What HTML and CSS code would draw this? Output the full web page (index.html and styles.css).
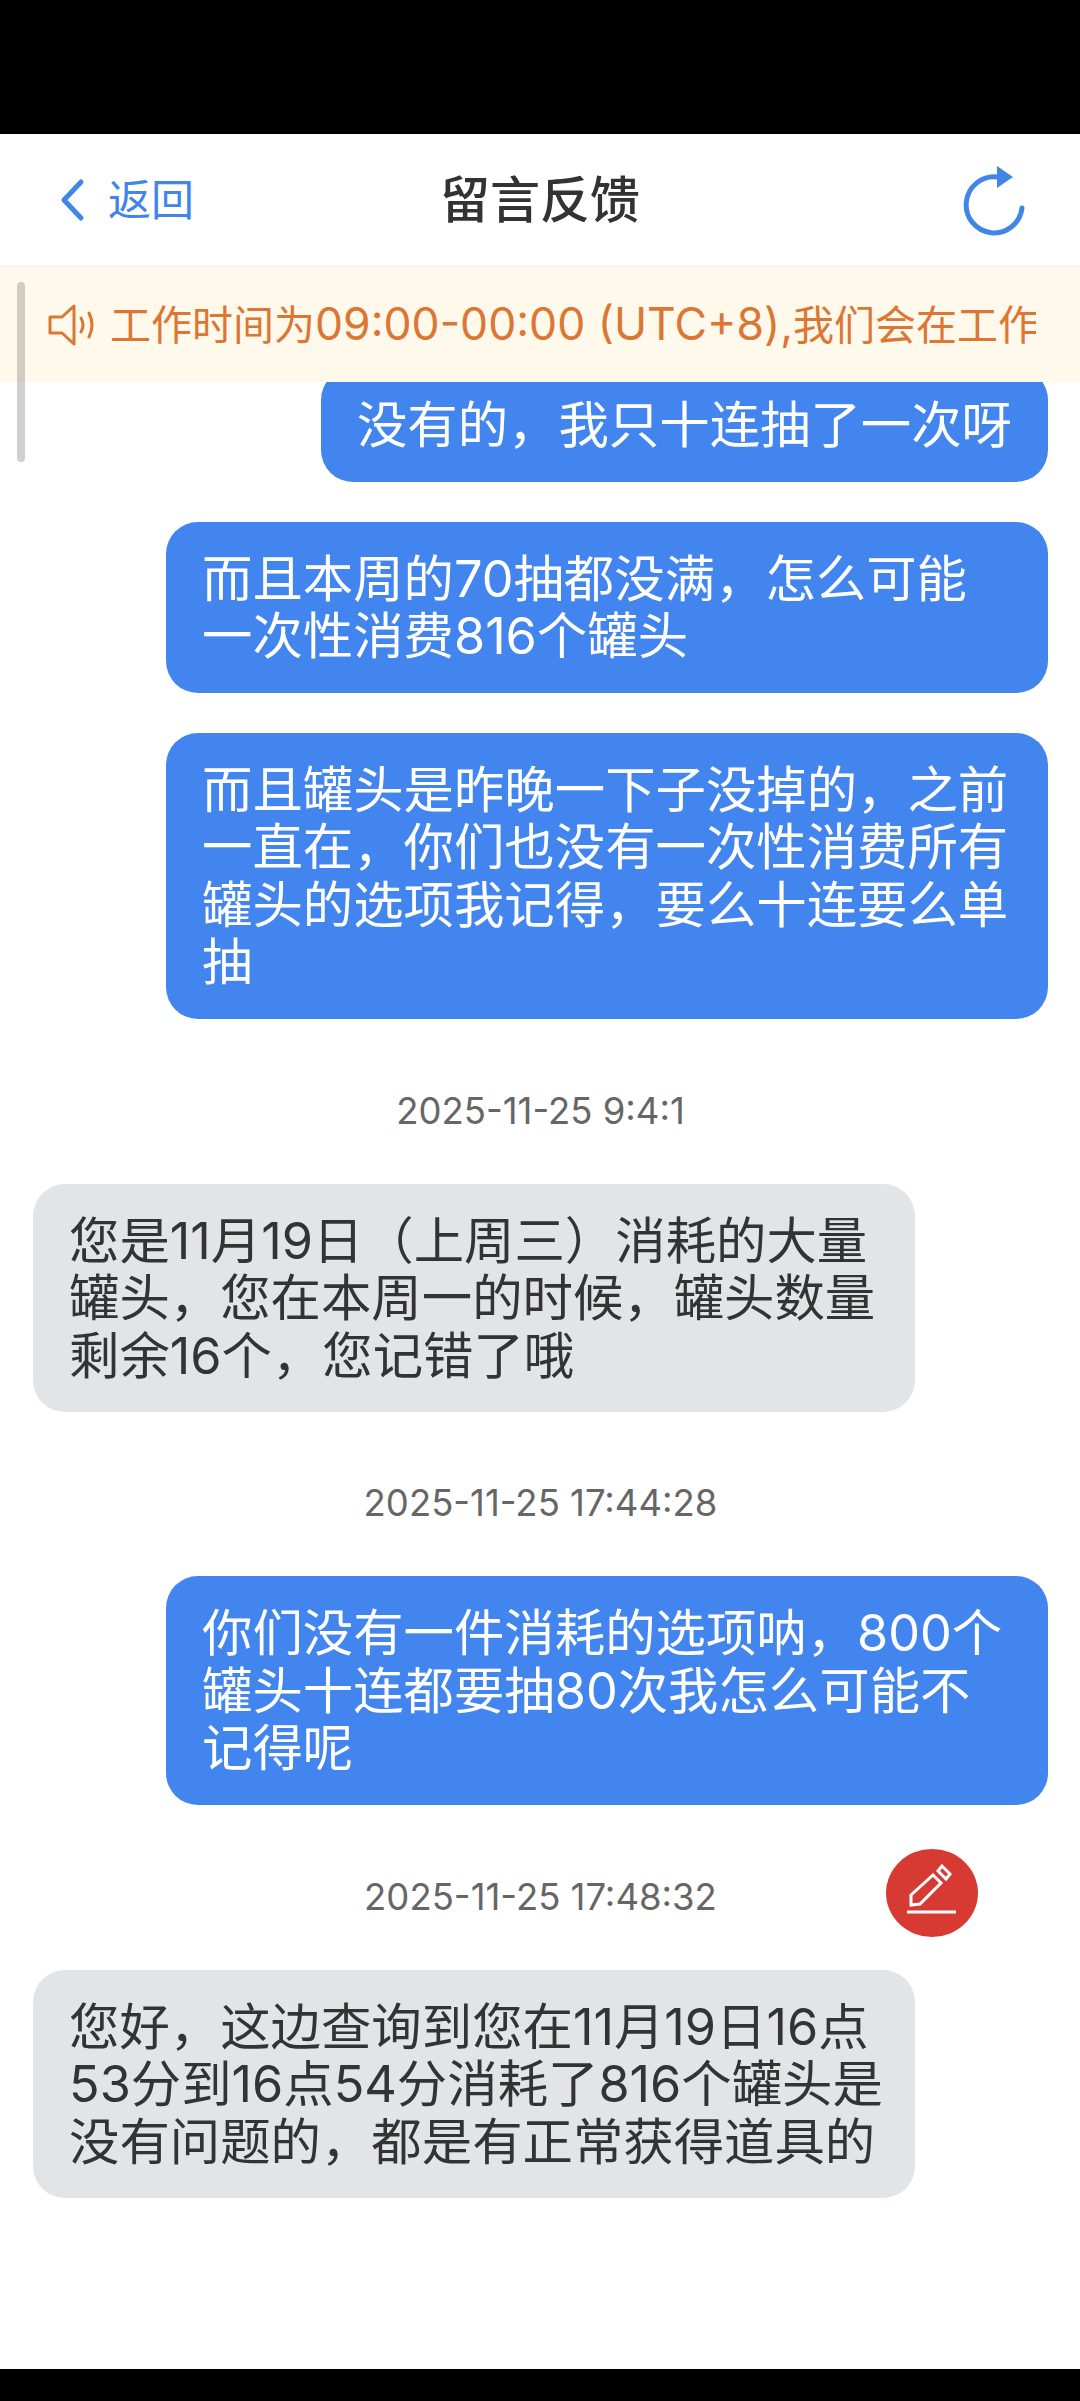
FILE: index.html
```html
<!DOCTYPE html>
<html lang="zh-CN">
<head>
  <meta charset="UTF-8">
  <meta name="viewport" content="width=device-width, initial-scale=1.0">
  <title>留言反馈</title>
  <link rel="stylesheet" href="styles.css">
</head>
<body>
  <div class="black-bar top"></div>
  <div class="page">
    <div class="header">
      <div class="back">
        <svg class="back-icon" viewBox="0 0 28 44"><path d="M23 4 L6 22 L23 40"/></svg>
        <span>返回</span>
      </div>
      <div class="title">留言反馈</div>
      <svg class="refresh" viewBox="0 0 64 72"><path class="ring" d="M36 13 A28 28 0 1 0 61 44"/><path class="arrow" d="M36 2 L52 13 L36 24 Z"/></svg>
    </div>
    <div class="notice">
      <svg class="speaker" viewBox="0 0 48 44"><path d="M2 14 H14 L26 3 V41 L14 30 H2 Z"/><path d="M33 15 Q37 22 33 29"/><path d="M41 10 Q47 22 41 34"/></svg>
      <div class="notice-text">工作时间为<span class="notice-latin">09:00-00:00 (UTC+8),</span>我们会在工作</div>
    </div>
    <div class="scrollbar"></div>
    <div class="chat">
      <div class="msg me first">没有的，我只十连抽了一次呀</div>
      <div class="msg me wide">而且本周的70抽都没满，怎么可能一次性消费816个罐头</div>
      <div class="msg me wide">而且罐头是昨晚一下子没掉的，之前一直在，你们也没有一次性消费所有罐头的选项我记得，要么十连要么单抽</div>
      <div class="time">2025-11-25 9:4:1</div>
      <div class="msg them">您是11月19日（上周三）消耗的大量罐头，您在本周一的时候，罐头数量剩余16个，您记错了哦</div>
      <div class="time">2025-11-25 17:44:28</div>
      <div class="msg me wide">你们没有一件消耗的选项呐，800个罐头十连都要抽80次我怎么可能不记得呢</div>
      <div class="time">2025-11-25 17:48:32</div>
      <div class="msg them">您好，这边查询到您在11月19日16点53分到16点54分消耗了816个罐头是没有问题的，都是有正常获得道具的</div>
    </div>
    <div class="fab">
      <svg viewBox="-30 -30 60 60">
        <path d="M-21 2 L1 -18 L9 -10 L-12 11 L-21 12 Z"/>
        <path d="M10 -27 L18 -19 L14 -14 L6 -22 Z"/>
        <path d="M-25 19 H24"/>
      </svg>
    </div>
  </div>
  <div class="black-bar bottom"></div>
</body>
</html>
```

FILE: styles.css
```css
* { box-sizing: border-box; }
html, body { margin: 0; padding: 0; }
body { font-family: Inter, "Noto Sans CJK SC", sans-serif; background: #000; width: 1080px; height: 2401px; overflow: hidden; display: flex; flex-direction: column; }
.black-bar { background: #000; flex: none; }
.black-bar.top { height: 134px; }
.black-bar.bottom { height: 32px; }
.page { position: relative; flex: 1; background: #fff; overflow: hidden; }

.header { height: 131px; display: flex; align-items: center; justify-content: space-between; padding: 0 55px 0 58px; position: relative; z-index: 2; background: #fff; }
.back { display: flex; align-items: center; gap: 22px; color: #4285e8; font-size: 43px; line-height: 60px; }
.back-icon { width: 28px; height: 44px; fill: none; stroke: #4285e8; stroke-width: 5; stroke-linecap: round; stroke-linejoin: round; }
.title { position: absolute; left: 0; right: 0; text-align: center; font-size: 50px; line-height: 60px; font-weight: 500; color: #333; pointer-events: none; }
.refresh { width: 64px; height: 72px; fill: none; }
.refresh .ring { stroke: #4285e8; stroke-width: 5; stroke-linecap: round; }
.refresh .arrow { fill: #4285e8; }

.notice { height: 117px; background: #fef9ea; border-top: 2px solid #f5f5f2; display: flex; align-items: center; padding: 0 44px 0 48px; gap: 14px; position: relative; z-index: 2; color: #dc7634; }
.speaker { width: 48px; height: 44px; flex: none; fill: none; stroke: #dc7634; stroke-width: 3; stroke-linejoin: round; stroke-linecap: round; }
.notice-text { font-size: 41px; line-height: 60px; white-space: nowrap; overflow: hidden; flex: 1; }
.notice-latin { font-size: 44.5px; }
.scrollbar { position: absolute; left: 17px; top: 148px; width: 8px; height: 180px; border-radius: 4px; background: rgba(120,120,120,0.35); z-index: 3; }

.chat { display: flex; flex-direction: column; padding: 0 32px 0 33px; margin-top: -14px; }
.msg { font-size: 50.4px; line-height: 57.5px; padding: 28px 36px; border-radius: 32px; }
.me { background: #4285ef; color: #fff; align-self: flex-end; margin-bottom: 40px; }
.me.wide { width: 882px; }
.them { background: #e3e4e8; color: #333; width: 882px; padding-right: 20px; }
.time { font-size: 36.5px; line-height: 50px; color: #666; text-align: center; margin: 66px 0 48px; }
.me + .time { margin-top: 27px; }

.fab { position: absolute; left: 886px; top: 1715px; width: 92px; height: 88px; border-radius: 50%; background: #d63a32; display: flex; align-items: center; justify-content: center; }
.fab svg { width: 60px; height: 60px; flex: none; fill: none; stroke: #fff; stroke-width: 3; }
```
